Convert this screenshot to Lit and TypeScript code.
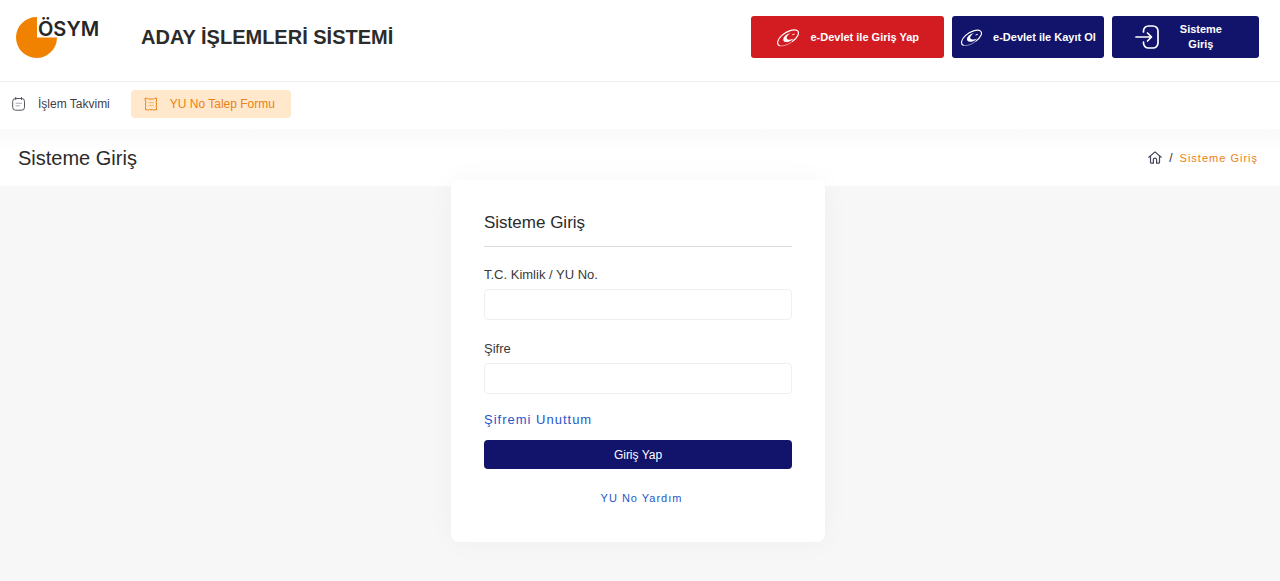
import { LitElement, html, css, svg } from "lit";
import { customElement } from "lit/decorators.js";

const swirl = svg`
  <path d="M3.400 18.600C0.400 17.400 1.200 12.600 5.600 8.600 10.600 4 18 1.600 21.200 3.600c2.800 1.900.6 6.900-4.600 10.700" fill="none" stroke="currentColor" stroke-width="1.200" stroke-linecap="round"/>
  <path d="M3.400 18.600c3.400 1.200 9-.8 13.200-4.300" fill="none" stroke="currentColor" stroke-width="0.900" stroke-linecap="round" opacity="0.600"/>
  <path d="M14.600 6.200c-3 .2-6.400 2.600-7.200 5.200-.9 2.900 1.600 4.200 4.800 3.500 2.300-.5 4.200-1.700 5.500-3.300-2 1-4.200 1.300-5.600.8-1.700-.6-1.900-2-.8-3.500.9-1.200 2.100-2.100 3.300-2.700z" fill="currentColor"/>
  <path d="M15.600 8.200c1-1 2.300-1.500 3.400-1.400-.4 1-1.800 1.500-3.400 1.400z" fill="currentColor"/>`;

@customElement("app-root")
export class AppRoot extends LitElement {
  static styles = css`
    :host {
      display: flex;
      flex-direction: column;
      min-height: 100vh;
      background: #f7f7f7;
      color: #2b2b2b;
      font-family: "Liberation Sans", Arial, sans-serif;
      font-size: 13px;
      line-height: 16px;
    }
    * {
      box-sizing: border-box;
    }
    a {
      color: inherit;
      text-decoration: none;
    }
    svg {
      display: block;
      flex: none;
    }
    .header {
      display: flex;
      align-items: flex-start;
      justify-content: space-between;
      gap: 24px;
      padding: 16px 21px 23px 16px;
      border-bottom: 1px solid #f1f1f1;
      background: #fff;
    }
    .brand {
      display: flex;
      align-items: center;
      gap: 40px;
    }
    .brand h1 {
      margin: 0;
      font-size: 20px;
      line-height: 24px;
      font-weight: 700;
    }
    .actions {
      display: flex;
      gap: 8px;
    }
    .action {
      display: flex;
      align-items: center;
      justify-content: center;
      gap: 10px;
      height: 42px;
      padding: 0 8px;
      border: 0;
      border-radius: 3px;
      background: #12136b;
      color: #fff;
      font: 700 11px/15px "Liberation Sans", Arial, sans-serif;
      cursor: pointer;
    }
    .primary {
      padding: 0 25px;
      background: #d31b22;
    }
    .enter {
      gap: 20px;
      padding: 0 37px 0 23px;
    }
    .nav {
      display: flex;
      gap: 9px;
      padding: 8px 0 11px;
      background: #fff;
    }
    .nav a {
      display: flex;
      align-items: center;
      gap: 12px;
      height: 28px;
      padding: 0 12px;
      border-radius: 4px;
      font-size: 12px;
      color: #3f4047;
    }
    .nav .current {
      padding: 0 16px 0 13px;
      background: #ffe8cb;
      color: #ec8114;
    }
    .titlebar {
      display: flex;
      align-items: center;
      justify-content: space-between;
      height: 57px;
      padding: 0 22px 0 18px;
      background: linear-gradient(#fafafa, #fff 24px);
    }
    .titlebar h2 {
      margin: 0;
      font-size: 20px;
      line-height: 24px;
      font-weight: 400;
    }
    .crumbs {
      display: flex;
      align-items: center;
      gap: 7px;
      font-size: 12px;
    }
    .crumbs .here {
      color: #ec8114;
    }
    .tracked {
      font-size: 11px;
      letter-spacing: 1px;
    }
    .content {
      display: flex;
      justify-content: center;
      padding: 0 16px 38px 12px;
    }
    .card {
      display: flex;
      flex-direction: column;
      width: 100%;
      max-width: 374px;
      margin-top: -6px;
      padding: 31px 33px 36px;
      border-radius: 8px;
      background: #fff;
      box-shadow: 0 0 28px rgba(0, 0, 0, 0.04);
    }
    .card h3 {
      margin: 0 0 20px;
      padding-bottom: 11px;
      border-bottom: 1px solid #d9d9d9;
      font-size: 17px;
      line-height: 24px;
      font-weight: 400;
    }
    .field {
      display: flex;
      flex-direction: column;
      gap: 6px;
      color: #3a3a3a;
    }
    .field + .field {
      margin: 21px 0 18px;
    }
    .field input {
      width: 100%;
      height: 31px;
      padding: 0 10px;
      border: 1px solid #efeff1;
      border-radius: 4px;
      background: #fff;
      font: inherit;
      outline: none;
    }
    .field input:focus {
      border-color: #12136b;
    }
    .link {
      align-self: flex-start;
      margin-bottom: 12px;
      color: #1f57c8;
      letter-spacing: 1px;
    }
    .submit {
      height: 29px;
      margin-bottom: 21px;
      border: 0;
      border-radius: 4px;
      background: #12136b;
      color: #fff;
      font: 12px/16px "Liberation Sans", Arial, sans-serif;
      cursor: pointer;
    }
    .help {
      align-self: center;
      padding-left: 7px;
      color: #1f57c8;
    }
  `;

  render() {
    return html`
      <header class="header">
        <div class="brand">
          <svg width="85" height="42" viewBox="0 0 85 42" role="img" aria-label="ÖSYM">
            <path d="M21 1A20.500 20.500 0 1 0 41 21.500H21z" fill="#f08200" />
            <text x="22" y="20" font-family="Inter, sans-serif" font-weight="600" font-size="20" fill="#262626">ÖSYM</text>
          </svg>
          <h1>ADAY İŞLEMLERİ SİSTEMİ</h1>
        </div>
        <div class="actions">
          <button class="action primary" type="button">
            <svg width="24" height="20" viewBox="0 0 24 20" aria-hidden="true">${swirl}</svg>
            e-Devlet ile Giriş Yap
          </button>
          <button class="action" type="button">
            <svg width="23" height="20" viewBox="0 0 24 20" aria-hidden="true">${swirl}</svg>
            e-Devlet ile Kayıt Ol
          </button>
          <button class="action enter" type="button">
            <svg width="25" height="24" viewBox="0 0 25 24" fill="none" stroke="currentColor" stroke-width="1.700" stroke-linecap="round" stroke-linejoin="round" aria-hidden="true">
              <path d="M8.500 7V6a5 5 0 0 1 5-5h4.500a5 5 0 0 1 5 5v12a5 5 0 0 1-5 5h-4.500a5 5 0 0 1-5-5v-1" />
              <path d="M1 12h15M12.500 8l4 4-4 4" />
            </svg>
            <span>Sisteme<br />Giriş</span>
          </button>
        </div>
      </header>

      <nav class="nav">
        <a href="#takvim">
          <svg width="14" height="14" viewBox="0 0 14 14" fill="none" stroke="#55565f" stroke-linecap="round" aria-hidden="true">
            <rect x="0.700" y="1.500" width="11.800" height="11.700" rx="2.800" />
            <path d="M3.700.5v2M9.500.5v2" />
            <path d="M4 6.300h5.500M4 8.800h3.500" stroke="#a9abb8" />
          </svg>
          İşlem Takvimi
        </a>
        <a class="current" href="#yu-no" aria-current="page">
          <svg width="14" height="14" viewBox="0 0 14 14" fill="none" stroke="#ec8114" stroke-linecap="round" stroke-linejoin="round" aria-hidden="true">
            <path d="M1.500 1.300h2L4.500 2h5l1-.7h2v3l-.6.8.6.9v2.200l-.6.9.6.8v2.800h-1.600L9.800 13.300 8.400 12.400 7 13l-1.400-.6-1.400.9-1.100-.6H1.500V9.900l.6-.8-.6-.9V6l.6-.9-.6-.8z" />
            <path d="M4.700 5.600h4.600M4.700 8.400h4.600" stroke="#f5b672" />
          </svg>
          YU No Talep Formu
        </a>
      </nav>

      <section class="titlebar">
        <h2>Sisteme Giriş</h2>
        <nav class="crumbs" aria-label="Konum">
          <a href="#anasayfa" aria-label="Ana Sayfa">
            <svg width="14" height="13" viewBox="0 0 14 13" fill="none" stroke="#44465a" stroke-width="1.200" stroke-linecap="round" stroke-linejoin="round">
              <path d="M.8 6.200 7 .9l6.200 5.300M2.500 5v6.200c0 .6.400 1 1 1h1.900V8.700c0-1 .6-1.600 1.600-1.600s1.600.6 1.600 1.600v3.500h1.900c.6 0 1-.4 1-1V5" />
            </svg>
          </a>
          <span>/</span>
          <span class="here tracked">Sisteme Giriş</span>
        </nav>
      </section>

      <main class="content">
        <form class="card" @submit=${(e: Event) => e.preventDefault()}>
          <h3>Sisteme Giriş</h3>
          <div class="field">
            <label for="kimlik">T.C. Kimlik / YU No.</label>
            <input id="kimlik" type="text" autocomplete="username" />
          </div>
          <div class="field">
            <label for="sifre">Şifre</label>
            <input id="sifre" type="password" autocomplete="current-password" />
          </div>
          <a class="link" href="#sifre-unuttum">Şifremi Unuttum</a>
          <button class="submit" type="submit">Giriş Yap</button>
          <a class="help tracked" href="#yardim">YU No Yardım</a>
        </form>
      </main>
    `;
  }
}
